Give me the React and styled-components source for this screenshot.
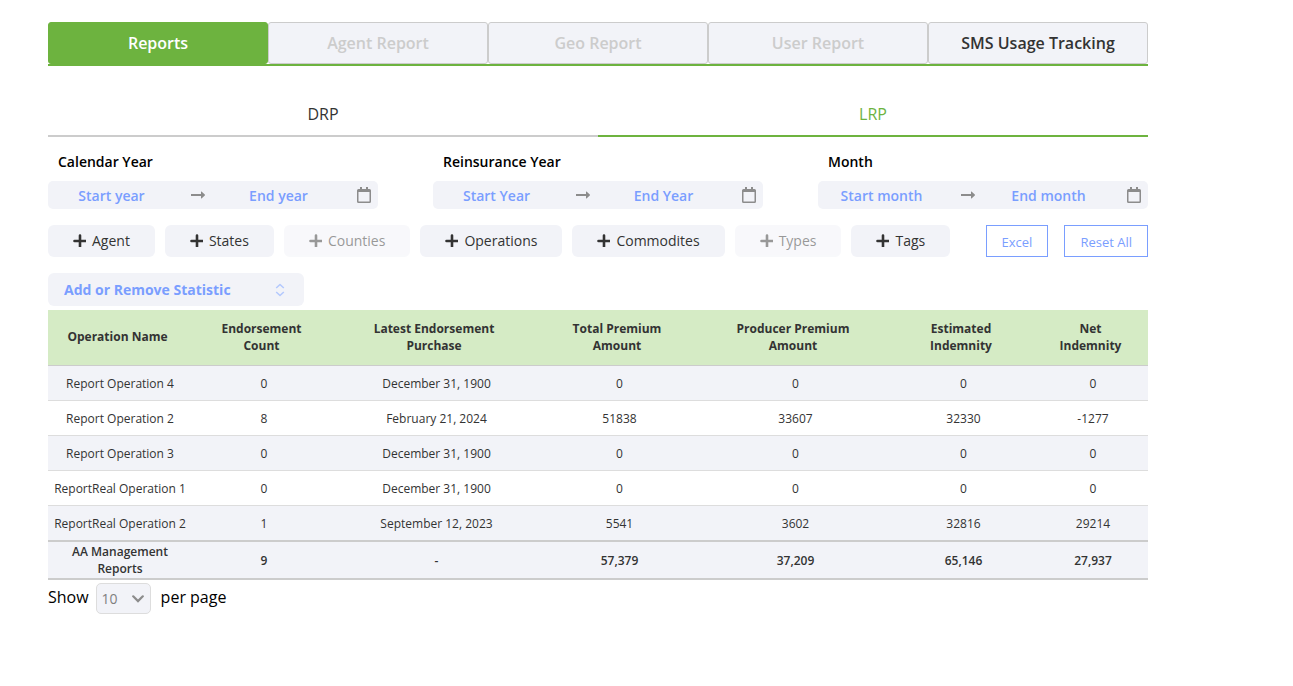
import React from "react";
import styled, { createGlobalStyle } from "styled-components";

const GlobalStyle = createGlobalStyle`
  * {
    box-sizing: border-box;
  }
  body {
    margin: 0;
    background: #ffffff;
    color: #333333;
    font-family: "Open Sans", "Noto Sans", sans-serif;
    font-size: 16px;
  }
  button, input, select {
    font-family: inherit;
    margin: 0;
  }
`;

const Page = styled.main`
  max-width: 1148px;
  padding: 22px 0 22px 48px;
`;

const Tabs = styled.nav`
  display: flex;
  border-bottom: 2px solid #6db33f;
`;

const Tab = styled.button`
  flex: 1;
  height: 42px;
  padding: 0;
  border: 1px solid ${(p) => (p.$active ? "#6db33f" : "#cccccc")};
  border-radius: 3px;
  background: ${(p) => (p.$active ? "#6db33f" : "#f2f3f8")};
  color: ${(p) => (p.$active ? "#ffffff" : "#333333")};
  font-size: 16px;
  font-weight: 600;

  &:disabled {
    color: #cccccc;
  }
`;

const SubTabs = styled.nav`
  display: flex;
  margin-top: 24px;
`;

const SubTab = styled.button`
  flex: 1;
  height: 47px;
  padding: 2px 0 0;
  border: none;
  border-bottom: 2px solid ${(p) => (p.$active ? "#6db33f" : "#cccccc")};
  background: transparent;
  color: ${(p) => (p.$active ? "#6db33f" : "#333333")};
  font-size: 16px;
`;

const Ranges = styled.section`
  display: flex;
  justify-content: space-between;
  margin-top: 14px;
`;

const RangeField = styled.div`
  flex: 0 1 30%;
`;

const RangeLabel = styled.label`
  display: block;
  padding-left: 10px;
  color: #000000;
  font-size: 14px;
  font-weight: 600;
  line-height: 22px;
`;

const RangeBox = styled.div`
  display: grid;
  grid-template-columns: 127fr 45fr 117fr 41fr;
  align-items: center;
  justify-items: center;
  height: 28px;
  margin-top: 8px;
  border-radius: 5px;
  background: #f2f3f8;
  color: #8c8c8c;

  svg:last-child {
    justify-self: end;
    margin-right: 7px;
  }
`;

const RangeInput = styled.input`
  width: 100%;
  height: 28px;
  padding: 0;
  border: none;
  outline: none;
  background: transparent;
  color: #7a9eff;
  font-size: 14px;
  font-weight: 600;
  text-align: center;

  &::placeholder {
    color: #7a9eff;
    opacity: 1;
  }
`;

const Toolbar = styled.section`
  display: flex;
  justify-content: space-between;
  margin-top: 16px;
`;

const FilterGroup = styled.div`
  display: flex;
  gap: 10px;
`;

const ActionGroup = styled.div`
  display: flex;
  gap: 16px;
`;

const FilterButton = styled.button`
  display: flex;
  align-items: center;
  gap: 6px;
  height: 32px;
  padding: 0 25px 2px;
  border: none;
  border-radius: 6px;
  background: #f2f3f8;
  color: #333333;
  font-size: 14px;

  &:disabled {
    opacity: 0.5;
  }
`;

const OutlineButton = styled.button`
  height: 32px;
  padding: 2px 15px 0;
  border: 1px solid #7a9eff;
  background: #ffffff;
  color: #7a9eff;
  font-size: 13px;
`;

const StatisticField = styled.div`
  position: relative;
  width: 256px;
  margin-top: 16px;
  margin-bottom: 4px;

  svg {
    position: absolute;
    top: 10px;
    right: 19px;
    pointer-events: none;
  }
`;

const StatisticSelect = styled.select`
  display: block;
  appearance: none;
  width: 100%;
  height: 33px;
  padding: 0 16px;
  border: none;
  border-radius: 6px;
  background: #f2f3f8;
  color: #7a9eff;
  font-size: 14px;
  font-weight: 700;
`;

const Table = styled.table`
  width: 100%;
  table-layout: fixed;
  border-collapse: separate;
  border-spacing: 0;
  font-size: 12px;
  line-height: 17px;
  text-align: center;
`;

const HeadCell = styled.th`
  height: 56px;
  padding: 0 5px 2px 0;
  border-bottom: 1px solid #cccccc;
  background: #d5ebc5;
  font-weight: 700;
`;

const Row = styled.tr`
  &:nth-child(odd) {
    background: #f2f3f8;
  }
  &:last-child td {
    height: 36px;
    border-bottom: 2px solid #cccccc;
  }
`;

const Cell = styled.td`
  height: 35px;
  padding: 0;
  border-bottom: 1px solid #dddddd;
`;

const TotalCell = styled.td`
  height: 38px;
  padding: 0 20px;
  border-bottom: 2px solid #cccccc;
  background: #f2f3f8;
  font-weight: 600;
`;

const Pager = styled.div`
  display: flex;
  align-items: flex-start;
  margin-top: 3px;
  color: #000000;
  line-height: 28px;
`;

const PageSize = styled.div`
  position: relative;
  margin: 0 10px 0 7px;
  color: #8c8c8c;

  svg {
    position: absolute;
    top: 12px;
    right: 7px;
    pointer-events: none;
  }
`;

const PageSizeSelect = styled.select`
  display: block;
  appearance: none;
  width: 55px;
  height: 31px;
  padding: 0 5px;
  border: 1px solid #dddddd;
  border-radius: 5px;
  background: #f2f3f8;
  color: #7f7f7f;
  font-size: 14px;
`;

const PlusIcon = () => (
  <svg width="13" height="14" viewBox="0 0 13 14" aria-hidden="true">
    <path d="M7 2.500v11M1.500 8h11" stroke="currentColor" strokeWidth="2.600" strokeLinecap="round" />
  </svg>
);

const ArrowIcon = () => (
  <svg width="14" height="8" viewBox="0 0 14 8" aria-hidden="true">
    <path d="M0 3h10V.8q0-.6.5-.2l3.300 3q.4.4 0 .8l-3.300 3q-.5.4-.5-.2V5H0z" fill="currentColor" />
  </svg>
);

const CalendarIcon = () => (
  <svg width="14" height="16" viewBox="0 0 14 16" aria-hidden="true">
    <path
      d="M3 0h2v2h4V0h2v2h1.500A1.500 1.500 0 0 1 14 3.500v11a1.500 1.500 0 0 1-1.500 1.500h-11A1.500 1.500 0 0 1 0 14.500v-11A1.500 1.500 0 0 1 1.500 2H3zM1.500 5v9.200q0 .3.300.3h10.400q.3 0 .3-.3V5z"
      fill="currentColor"
    />
  </svg>
);

const SortIcon = () => (
  <svg width="10" height="14" viewBox="0 0 10 14" aria-hidden="true">
    <path
      d="M1.200 5 5 1.500 8.800 5M1.200 9 5 12.500 8.800 9"
      fill="none"
      stroke="#b3c8fd"
      strokeWidth="1.500"
      strokeLinejoin="round"
    />
  </svg>
);

const ChevronIcon = () => (
  <svg width="12" height="8" viewBox="0 0 12 8" aria-hidden="true">
    <path d="M1.200 1.300 6 6.100 10.800 1.300" fill="none" stroke="currentColor" strokeWidth="2.200" strokeLinecap="round" />
  </svg>
);

const tabs = [
  { name: "Reports", active: true },
  { name: "Agent Report", disabled: true },
  { name: "Geo Report", disabled: true },
  { name: "User Report", disabled: true },
  { name: "SMS Usage Tracking" },
];

const ranges = [
  { id: "calendar", label: "Calendar Year", start: "Start year", end: "End year" },
  { id: "reinsurance", label: "Reinsurance Year", start: "Start Year", end: "End Year" },
  { id: "month", label: "Month", start: "Start month", end: "End month" },
];

const filters = [
  { name: "Agent" },
  { name: "States" },
  { name: "Counties", disabled: true },
  { name: "Operations" },
  { name: "Commodites" },
  { name: "Types", disabled: true },
  { name: "Tags" },
];

const columns = [
  { title: ["Operation Name"], width: 144 },
  { title: ["Endorsement", "Count"], width: 144 },
  { title: ["Latest Endorsement", "Purchase"], width: 201 },
  { title: ["Total Premium", "Amount"], width: 165 },
  { title: ["Producer Premium", "Amount"], width: 187 },
  { title: ["Estimated", "Indemnity"], width: 149 },
  { title: ["Net", "Indemnity"], width: 110 },
];

const Col = styled.col`
  width: ${(p) => p.$width}px;
`;

const rows = [
  ["Report Operation 4", "0", "December 31, 1900", "0", "0", "0", "0"],
  ["Report Operation 2", "8", "February 21, 2024", "51838", "33607", "32330", "-1277"],
  ["Report Operation 3", "0", "December 31, 1900", "0", "0", "0", "0"],
  ["ReportReal Operation 1", "0", "December 31, 1900", "0", "0", "0", "0"],
  ["ReportReal Operation 2", "1", "September 12, 2023", "5541", "3602", "32816", "29214"],
];

const totals = ["AA Management Reports", "9", "-", "57,379", "37,209", "65,146", "27,937"];

const App = () => {
  return (
    <Page>
      <GlobalStyle />
      <Tabs>
        {tabs.map((tab) => (
          <Tab key={tab.name} type="button" $active={tab.active} disabled={tab.disabled}>
            {tab.name}
          </Tab>
        ))}
      </Tabs>
      <SubTabs>
        <SubTab type="button">DRP</SubTab>
        <SubTab type="button" $active>
          LRP
        </SubTab>
      </SubTabs>
      <Ranges>
        {ranges.map((range) => (
          <RangeField key={range.id}>
            <RangeLabel htmlFor={range.id + "-start"}>{range.label}</RangeLabel>
            <RangeBox>
              <RangeInput id={range.id + "-start"} placeholder={range.start} />
              <ArrowIcon />
              <RangeInput aria-label={range.end} placeholder={range.end} />
              <CalendarIcon />
            </RangeBox>
          </RangeField>
        ))}
      </Ranges>
      <Toolbar>
        <FilterGroup>
          {filters.map((filter) => (
            <FilterButton key={filter.name} type="button" disabled={filter.disabled}>
              <PlusIcon />
              {filter.name}
            </FilterButton>
          ))}
        </FilterGroup>
        <ActionGroup>
          <OutlineButton type="button">Excel</OutlineButton>
          <OutlineButton type="button">Reset All</OutlineButton>
        </ActionGroup>
      </Toolbar>
      <StatisticField>
        <StatisticSelect aria-label="Add or Remove Statistic">
          <option>Add or Remove Statistic</option>
        </StatisticSelect>
        <SortIcon />
      </StatisticField>
      <Table>
        <colgroup>
          {columns.map((col) => (
            <Col key={col.title.join(" ")} $width={col.width} />
          ))}
        </colgroup>
        <thead>
          <tr>
            {columns.map((col) => (
              <HeadCell key={col.title.join(" ")} scope="col">
                {col.title[0]}
                {col.title[1] && <br />}
                {col.title[1]}
              </HeadCell>
            ))}
          </tr>
        </thead>
        <tbody>
          {rows.map((row) => (
            <Row key={row[0]}>
              {row.map((value, i) => (
                <Cell key={i}>{value}</Cell>
              ))}
            </Row>
          ))}
        </tbody>
        <tfoot>
          <tr>
            {totals.map((value, i) => (
              <TotalCell key={i}>{value}</TotalCell>
            ))}
          </tr>
        </tfoot>
      </Table>
      <Pager>
        <label htmlFor="page-size">Show</label>
        <PageSize>
          <PageSizeSelect id="page-size">
            <option>10</option>
          </PageSizeSelect>
          <ChevronIcon />
        </PageSize>
        per page
      </Pager>
    </Page>
  );
};

export default App;
